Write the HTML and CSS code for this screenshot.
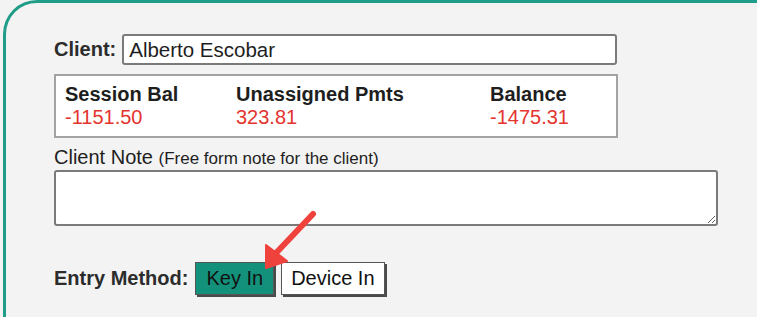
FILE: index.html
```html
<!DOCTYPE html>
<html lang="en">
<head>
  <meta charset="UTF-8">
  <title>Payment Entry</title>
  <link rel="stylesheet" href="styles.css">
</head>
<body>
  <div class="panel">

    <!-- Client name -->
    <div class="client-row">
      <label class="field-label" for="client">Client:</label>
      <input id="client" class="client-input" type="text" value="Alberto Escobar">
    </div>

    <!-- Balances summary -->
    <div class="balances">
      <div class="bal">
        <div class="bal-title">Session Bal</div>
        <div class="bal-value">-1151.50</div>
      </div>
      <div class="bal">
        <div class="bal-title">Unassigned Pmts</div>
        <div class="bal-value">323.81</div>
      </div>
      <div class="bal">
        <div class="bal-title">Balance</div>
        <div class="bal-value">-1475.31</div>
      </div>
    </div>

    <!-- Note -->
    <div class="note-label">Client Note <span class="note-hint">(Free form note for the client)</span></div>
    <textarea class="note-input"></textarea>

    <!-- Entry method -->
    <div class="entry-row">
      <span class="field-label">Entry Method:</span>
      <button class="method-btn active">Key In</button>
      <button class="method-btn">Device In</button>
    </div>

    <!-- Callout arrow -->
    <svg class="arrow" viewBox="0 0 80 70" xmlns="http://www.w3.org/2000/svg">
      <line x1="63" y1="9" x2="27" y2="47" />
      <polygon points="16,63 16,40 37,56" />
    </svg>
  </div>
</body>
</html>
```

FILE: styles.css
```css
:root {
  --teal: #1f9d88;
  --teal-btn: #13917b;
  --page-bg: #f3f3f3;
  --text: #1e1e1e;
  --red: #e5332e;
  --field-border: #7a7a7a;
  --font: "Liberation Sans", Arial, sans-serif;
}

* {
  box-sizing: border-box;
  margin: 0;
  padding: 0;
}

html, body {
  width: 100%;
  height: 100%;
  overflow: hidden;
  background: var(--page-bg);
  font-family: var(--font);
  font-size: 20px;
  color: var(--text);
}

/* === Outer rounded panel (open to the right and bottom) === */
.panel {
  position: relative;
  margin-left: 3px;
  height: 100%;
  border-top: 3px solid var(--teal);
  border-left: 3px solid var(--teal);
  border-top-left-radius: 34px;
  padding: 31px 0 0 48px;
}

.field-label {
  font-weight: bold;
  color: #2c2c2c;
  line-height: 23px;
}

/* === Client row === */
.client-row {
  display: flex;
  align-items: center;
  gap: 6px;
}
.client-input {
  width: 495px;
  height: 31px;
  border: 2px solid var(--field-border);
  border-radius: 3px;
  background: #fff;
  font-family: var(--font);
  font-size: 20.5px;
  color: var(--text);
  padding: 0 5px;
}

/* === Balances === */
.balances {
  display: grid;
  grid-template-columns: 171px 254px auto;
  width: 564px;
  margin-top: 9px;
  padding: 7px 9px;
  background: #fff;
  border: 2px solid #a3a3a3;
  line-height: 23px;
}
.bal-title {
  font-weight: bold;
}
.bal-value {
  color: var(--red);
}

/* === Note === */
.note-label {
  margin-top: 8px;
  line-height: 23px;
  height: 24px;
}
.note-hint {
  font-size: 17px;
}
.note-input {
  display: block;
  width: 664px;
  height: 56px;
  border: 2px solid var(--field-border);
  border-radius: 3px;
  background: #fff;
  resize: vertical;
}

/* === Entry method === */
.entry-row {
  display: flex;
  align-items: center;
  gap: 7px;
  margin-top: 36px;
}
.method-btn {
  height: 33px;
  padding: 0 9px;
  background: #fff;
  border: 1px solid #555;
  box-shadow: 2px 2px 0 #4a4a4a;
  font-family: var(--font);
  font-size: 20px;
  color: #111;
  cursor: pointer;
}
.method-btn.active {
  background: var(--teal-btn);
  padding: 0 10px;
}

/* === Red callout arrow === */
.arrow {
  position: absolute;
  left: 244px;
  top: 202px;
  width: 80px;
  height: 70px;
}
.arrow line {
  stroke: #f0423d;
  stroke-width: 6;
  stroke-linecap: round;
}
.arrow polygon {
  fill: #f0423d;
  stroke: #f0423d;
  stroke-width: 2;
  stroke-linejoin: round;
}
```
